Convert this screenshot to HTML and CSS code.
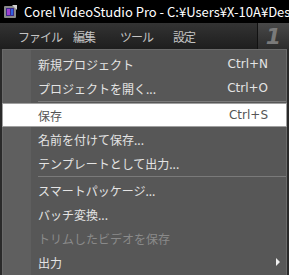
FILE: index.html
```html
<!DOCTYPE html>
<html lang="ja">
<head>
    <meta charset="UTF-8">
    <title>Corel VideoStudio Pro</title>
    <link rel="stylesheet" href="styles.css">
</head>
<body>
    <div class="titlebar">
        <svg class="app-icon" width="15" height="15" viewBox="0 0 15 15">
            <rect x="1" y="2" width="12" height="12" rx="1" fill="#8a8a8a"/>
            <rect x="3" y="4" width="8" height="8" fill="#3a2a8a"/>
            <rect x="4" y="5" width="3" height="6" fill="#a040d0"/>
            <rect x="8" y="5" width="2" height="6" fill="#3060e0"/>
            <path d="M9 1 L14 1 L14 6 Z" fill="#d0d0d0"/>
        </svg>
        <span class="title-text">Corel VideoStudio Pro - C:¥Users¥X-10A¥Desk</span>
    </div>

    <div class="menubar">
        <span class="menubar-item">ファイル</span>
        <span class="menubar-item">編集</span>
        <span class="menubar-item">ツール</span>
        <span class="menubar-item">設定</span>
        <div class="step-box">1</div>
    </div>

    <div class="menu">
        <div class="menu-row"><span>新規プロジェクト</span><span class="key">Ctrl+N</span></div>
        <div class="menu-row"><span>プロジェクトを開く...</span><span class="key">Ctrl+O</span></div>
        <div class="menu-sep"></div>
        <div class="menu-row selected"><span>保存</span><span class="key">Ctrl+S</span></div>
        <div class="menu-row"><span>名前を付けて保存...</span></div>
        <div class="menu-row"><span>テンプレートとして出力...</span></div>
        <div class="menu-sep"></div>
        <div class="menu-row"><span>スマートパッケージ...</span></div>
        <div class="menu-row"><span>バッチ変換...</span></div>
        <div class="menu-row disabled"><span>トリムしたビデオを保存</span></div>
        <div class="menu-row"><span>出力</span><span class="arrow"></span></div>
    </div>
</body>
</html>
```

FILE: styles.css
```css
body {
    margin: 0;
    width: 289px;
    height: 275px;
    overflow: hidden;
    background-color: #2a2a2a;
    font-family: "Noto Sans CJK JP", "DejaVu Sans", sans-serif;
}
.titlebar {
    height: 23px;
    background-color: #000;
    display: flex;
    align-items: center;
    padding-left: 3px;
    white-space: nowrap;
    overflow: hidden;
}
.app-icon {
    flex-shrink: 0;
    margin-right: 6px;
}
.title-text {
    color: #fff;
    font-size: 13px;
}
.menubar {
    height: 26px;
    background: linear-gradient(#333, #1e1e1e);
    display: grid;
    grid-template-columns: 55px 47px 53px 1fr 32px;
    align-items: center;
    padding-left: 18px;
}
.menubar-item {
    color: #c4c4c4;
    font-size: 12px;
    letter-spacing: -1px;
}
.step-box {
    grid-column: 5;
    align-self: stretch;
    border-left: 1px solid #111;
    background: linear-gradient(#484848, #2c2c2c);
    color: #7a7a7a;
    font-family: "DejaVu Sans", sans-serif;
    font-size: 22px;
    font-weight: bold;
    font-style: italic;
    display: flex;
    align-items: center;
    justify-content: center;
}
.menu {
    margin-left: 2px;
    width: 283px;
    border: 1px solid #6a6a6a;
    border-bottom: none;
    padding-top: 2px;
    background: linear-gradient(90deg, #5f5f5f 28px, #575757 28px);
    height: 230px;
}
.menu-row {
    height: 24px;
    display: flex;
    align-items: center;
    justify-content: space-between;
    padding: 0 18px 0 35px;
    color: #e4e4e4;
    font-size: 12px;
    box-sizing: border-box;
}
.menu-row.selected {
    background-color: #fff;
    border: 1px solid #a0a0a0;
    margin: 0 -1px;
    padding-left: 35px;
    color: #555;
}
.menu-row.disabled {
    color: #8a8a8a;
}
.key {
    font-family: "DejaVu Sans", sans-serif;
    font-size: 12px;
}
.menu-sep {
    height: 3px;
    margin-left: 35px;
    display: flex;
    align-items: center;
}
.menu-sep::after {
    content: "";
    flex: 1;
    height: 1px;
    background-color: #7a7a7a;
}
.arrow {
    width: 0;
    height: 0;
    border-top: 4px solid transparent;
    border-bottom: 4px solid transparent;
    border-left: 4px solid #f0f0f0;
    margin-right: -12px;
}
```
